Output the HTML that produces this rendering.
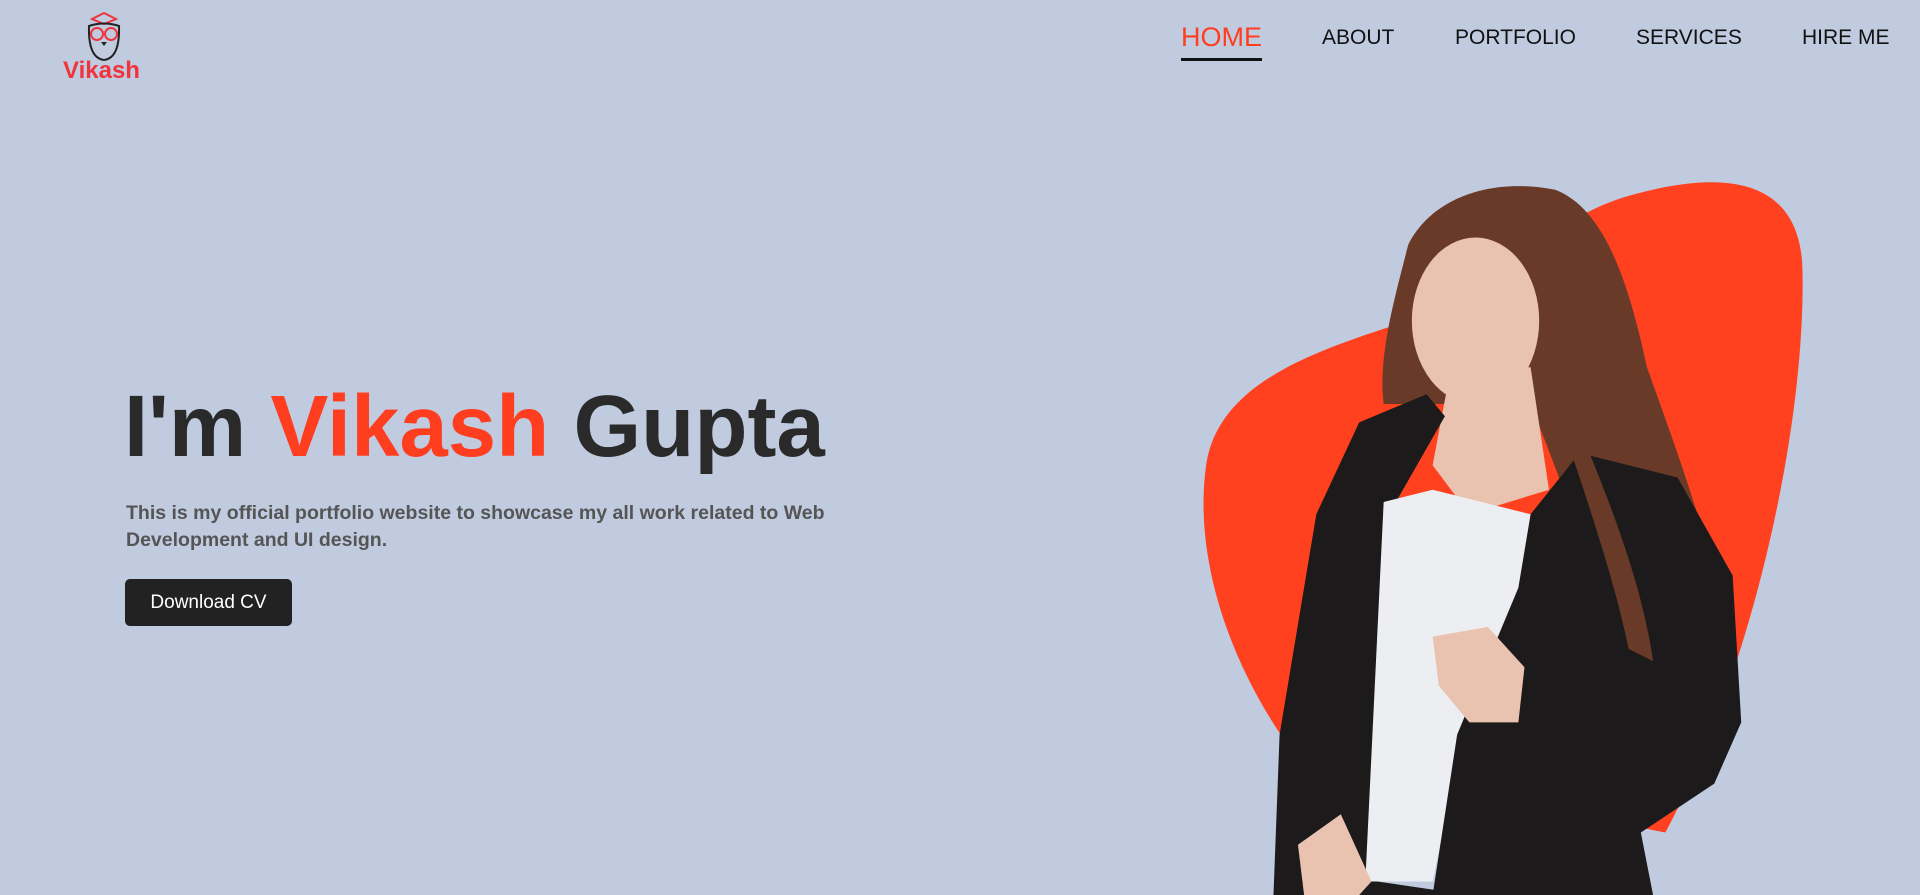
<!DOCTYPE html>
<html><head><meta charset="utf-8"><style>
*{margin:0;padding:0;box-sizing:border-box}
body{width:1920px;height:895px;overflow:hidden;background:#c0cbe0;font-family:"Liberation Sans",Arial,sans-serif;position:relative}
.nav a{position:absolute;top:25px;font-size:21px;color:#111;text-decoration:none;line-height:26px}
.nav a.home{font-size:27px;color:#ff3d1f;top:24px;left:1181px}
.nav a.home:after{content:"";position:absolute;left:0;right:0;top:34px;height:3px;background:#111}
h1{position:absolute;left:124px;top:377px;font-size:87px;font-weight:bold;color:#2a2a2a;line-height:100px;white-space:nowrap}
h1 span{color:#ff3d1f}
p{position:absolute;left:126px;top:500px;width:740px;font-size:19.5px;font-weight:bold;color:#555;line-height:27px}
.btn{position:absolute;left:125px;top:579px;width:167px;height:47px;background:#222;color:#fff;border-radius:5px;font-size:19px;line-height:47px;text-align:center}
.logo{position:absolute;left:63px;top:57px;font-size:24px;font-weight:bold;color:#f0343c}
</style></head><body>
<svg style="position:absolute;left:84px;top:12px" width="40" height="50" viewBox="0 0 40 50">
<path d="M8 7 L20 1 L32 7 L20 12 Z" fill="none" stroke="#f0343c" stroke-width="2"/>
<path d="M5 14 Q4 46 20 48 Q36 46 35 14 Q20 9 5 14 Z" fill="none" stroke="#222" stroke-width="2"/>
<circle cx="13" cy="22" r="6" fill="none" stroke="#f0343c" stroke-width="2"/>
<circle cx="27" cy="22" r="6" fill="none" stroke="#f0343c" stroke-width="2"/>
<path d="M17 30 L20 34 L23 30 Z" fill="#222"/>
</svg>
<div class="logo">Vikash</div>
<div class="nav">
<a class="home">HOME</a>
<a style="left:1322px">ABOUT</a>
<a style="left:1455px">PORTFOLIO</a>
<a style="left:1636px">SERVICES</a>
<a style="left:1802px">HIRE ME</a>
</div>
<h1>I'm <span>Vikash</span> Gupta</h1>
<p>This is my official portfolio website to showcase my all work related to Web Development and UI design.</p>
<div class="btn">Download CV</div>
<svg style="position:absolute;left:0;top:0" width="1920" height="895" viewBox="0 0 1568 731" preserveAspectRatio="none">
<path d="M1150,262 C1220,240 1260,180 1330,160 C1400,140 1470,140 1472,220 C1475,350 1430,550 1360,680 L1060,620 C1000,540 975,450 985,380 C995,310 1080,285 1150,262 Z" fill="#ff4120"/>
<path d="M1150,200 C1170,160 1220,145 1270,155 C1310,170 1330,230 1345,300 C1370,370 1400,450 1410,520 C1390,545 1350,545 1320,530 C1300,460 1270,380 1250,330 L1130,330 C1125,290 1140,240 1150,200 Z" fill="#6a3a28"/>
<ellipse cx="1205" cy="262" rx="52" ry="68" fill="#e9c3b0"/>
<path d="M1185,300 L1250,300 L1265,400 L1200,420 L1170,380 Z" fill="#e9c3b0"/>
<path d="M1040,731 L1045,600 L1075,420 L1110,345 L1165,322 L1180,340 L1140,410 L1125,720 L1200,731 Z" fill="#1c1a1a"/>
<path d="M1130,410 L1170,400 L1250,420 L1245,470 L1195,600 L1170,720 L1115,720 Z" fill="#eceef2"/>
<path d="M1250,420 L1290,370 L1370,390 L1415,470 L1422,590 L1400,640 L1340,680 L1350,731 L1170,731 L1190,600 L1240,480 Z" fill="#1c1a1a"/>
<path d="M1280,360 C1300,420 1320,480 1330,530 L1350,540 C1340,470 1310,400 1290,350 Z" fill="#6a3a28"/>
<path d="M1170,520 L1215,512 L1245,545 L1240,590 L1200,590 L1175,560 Z" fill="#e9c3b0"/>
<path d="M1060,690 L1095,665 L1120,720 L1110,731 L1065,731 Z" fill="#e9c3b0"/>
</svg>
</body></html>
